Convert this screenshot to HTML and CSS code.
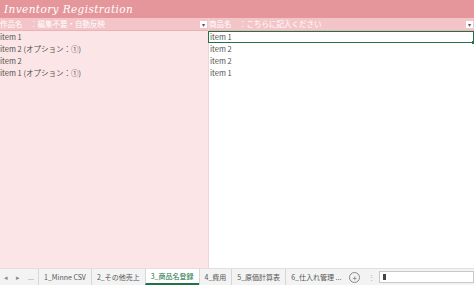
FILE: index.html
```html
<!DOCTYPE html>
<html lang="ja">
<head>
    <meta charset="UTF-8">
    <title>Inventory Registration</title>
    <link rel="stylesheet" href="styles.css">
</head>
<body>
    <div class="sheet">
        <div class="title-band">Inventory Registration</div>
        <div class="table">
            <div class="col col-left">
                <div class="head">
                    <span>作品名　：編集不要・自動反映</span>
                    <span class="drop">&#9662;</span>
                </div>
                <div class="cell">item 1</div>
                <div class="cell">item 2 (オプション：①)</div>
                <div class="cell">item 2</div>
                <div class="cell">item 1 (オプション：①)</div>
            </div>
            <div class="col col-right">
                <div class="head">
                    <span>商品名　：こちらに記入ください</span>
                    <span class="drop">&#9662;</span>
                </div>
                <div class="cell selected">item 1<span class="handle"></span></div>
                <div class="cell">item 2</div>
                <div class="cell">item 2</div>
                <div class="cell">item 1</div>
            </div>
        </div>
    </div>
    <div class="tabbar">
        <span class="nav">&#9666;</span>
        <span class="nav">&#9656;</span>
        <span class="nav more">...</span>
        <span class="tab">1_Minne CSV</span>
        <span class="tab">2_その他売上</span>
        <span class="tab active">3_商品名登録</span>
        <span class="tab">4_費用</span>
        <span class="tab">5_原価計算表</span>
        <span class="tab">6_仕入れ管理 ...</span>
        <span class="add">+</span>
        <span class="dots">&#8942;</span>
        <div class="hscroll"><span class="thumb"></span></div>
    </div>
</body>
</html>
```

FILE: styles.css
```css
body {
    margin: 0;
    width: 474px;
    height: 285px;
    overflow: hidden;
    font-family: "Noto Sans CJK JP", "Noto Sans", sans-serif;
    font-size: 7.5px;
    color: #505050;
    background-color: #fff;
    display: flex;
    flex-direction: column;
}
.sheet {
    flex: 1;
    display: flex;
    flex-direction: column;
}
.title-band {
    height: 18px;
    line-height: 18px;
    padding-left: 4px;
    background-color: #e4969b;
    color: #fff;
    font-family: "DejaVu Serif", serif;
    font-style: italic;
    font-size: 10.5px;
    letter-spacing: 0.4px;
}
.table {
    flex: 1;
    display: flex;
}
.col {
    display: flex;
    flex-direction: column;
}
.col-left {
    width: 208px;
    background-color: #fbe5e6;
    border-right: 1px solid #f3d3d5;
}
.col-right {
    flex: 1;
    background-color: #fff;
}
.head {
    height: 12px;
    line-height: 12px;
    display: flex;
    justify-content: space-between;
    align-items: center;
    background-color: #f4c5c8;
    color: #fff;
    border-bottom: 1px solid #e8b4b7;
    white-space: nowrap;
}
.drop {
    width: 7px;
    height: 7px;
    margin-right: 1px;
    background-color: #fff;
    color: #555;
    font-size: 6px;
    line-height: 7px;
    text-align: center;
}
.cell {
    height: 12px;
    line-height: 12px;
    white-space: nowrap;
}
.col-right .cell {
    padding-left: 1px;
}
.cell.selected {
    position: relative;
    height: 10px;
    line-height: 10px;
    border: 1px solid #217346;
    margin-left: -1px;
}
.handle {
    position: absolute;
    right: -2px;
    bottom: -2px;
    width: 3px;
    height: 3px;
    background-color: #217346;
}
.tabbar {
    height: 16px;
    display: flex;
    align-items: center;
    background-color: #f3f3f3;
    border-top: 1px solid #e0e0e0;
    color: #555;
    font-size: 7px;
    white-space: nowrap;
}
.nav {
    width: 12px;
    text-align: center;
    color: #888;
}
.nav.more {
    width: 14px;
}
.tab {
    padding: 0 5px;
    height: 16px;
    line-height: 16px;
    border-left: 1px solid #d6d6d6;
}
.tab:first-of-type {
    padding-left: 6px;
}
.tab.active {
    background-color: #fff;
    color: #217346;
    border-bottom: 2px solid #217346;
    height: 14px;
    line-height: 15px;
}
.add {
    width: 9px;
    height: 9px;
    margin-left: 3px;
    border: 1px solid #888;
    border-radius: 50%;
    font-size: 8px;
    line-height: 9px;
    text-align: center;
    color: #666;
}
.dots {
    margin-left: 8px;
    color: #aaa;
}
.hscroll {
    flex: 1;
    height: 10px;
    margin-left: 4px;
    background-color: #fff;
    border: 1px solid #c8c8c8;
    display: flex;
    align-items: center;
}
.thumb {
    width: 3px;
    height: 6px;
    margin-left: 3px;
    background-color: #444;
}
```
